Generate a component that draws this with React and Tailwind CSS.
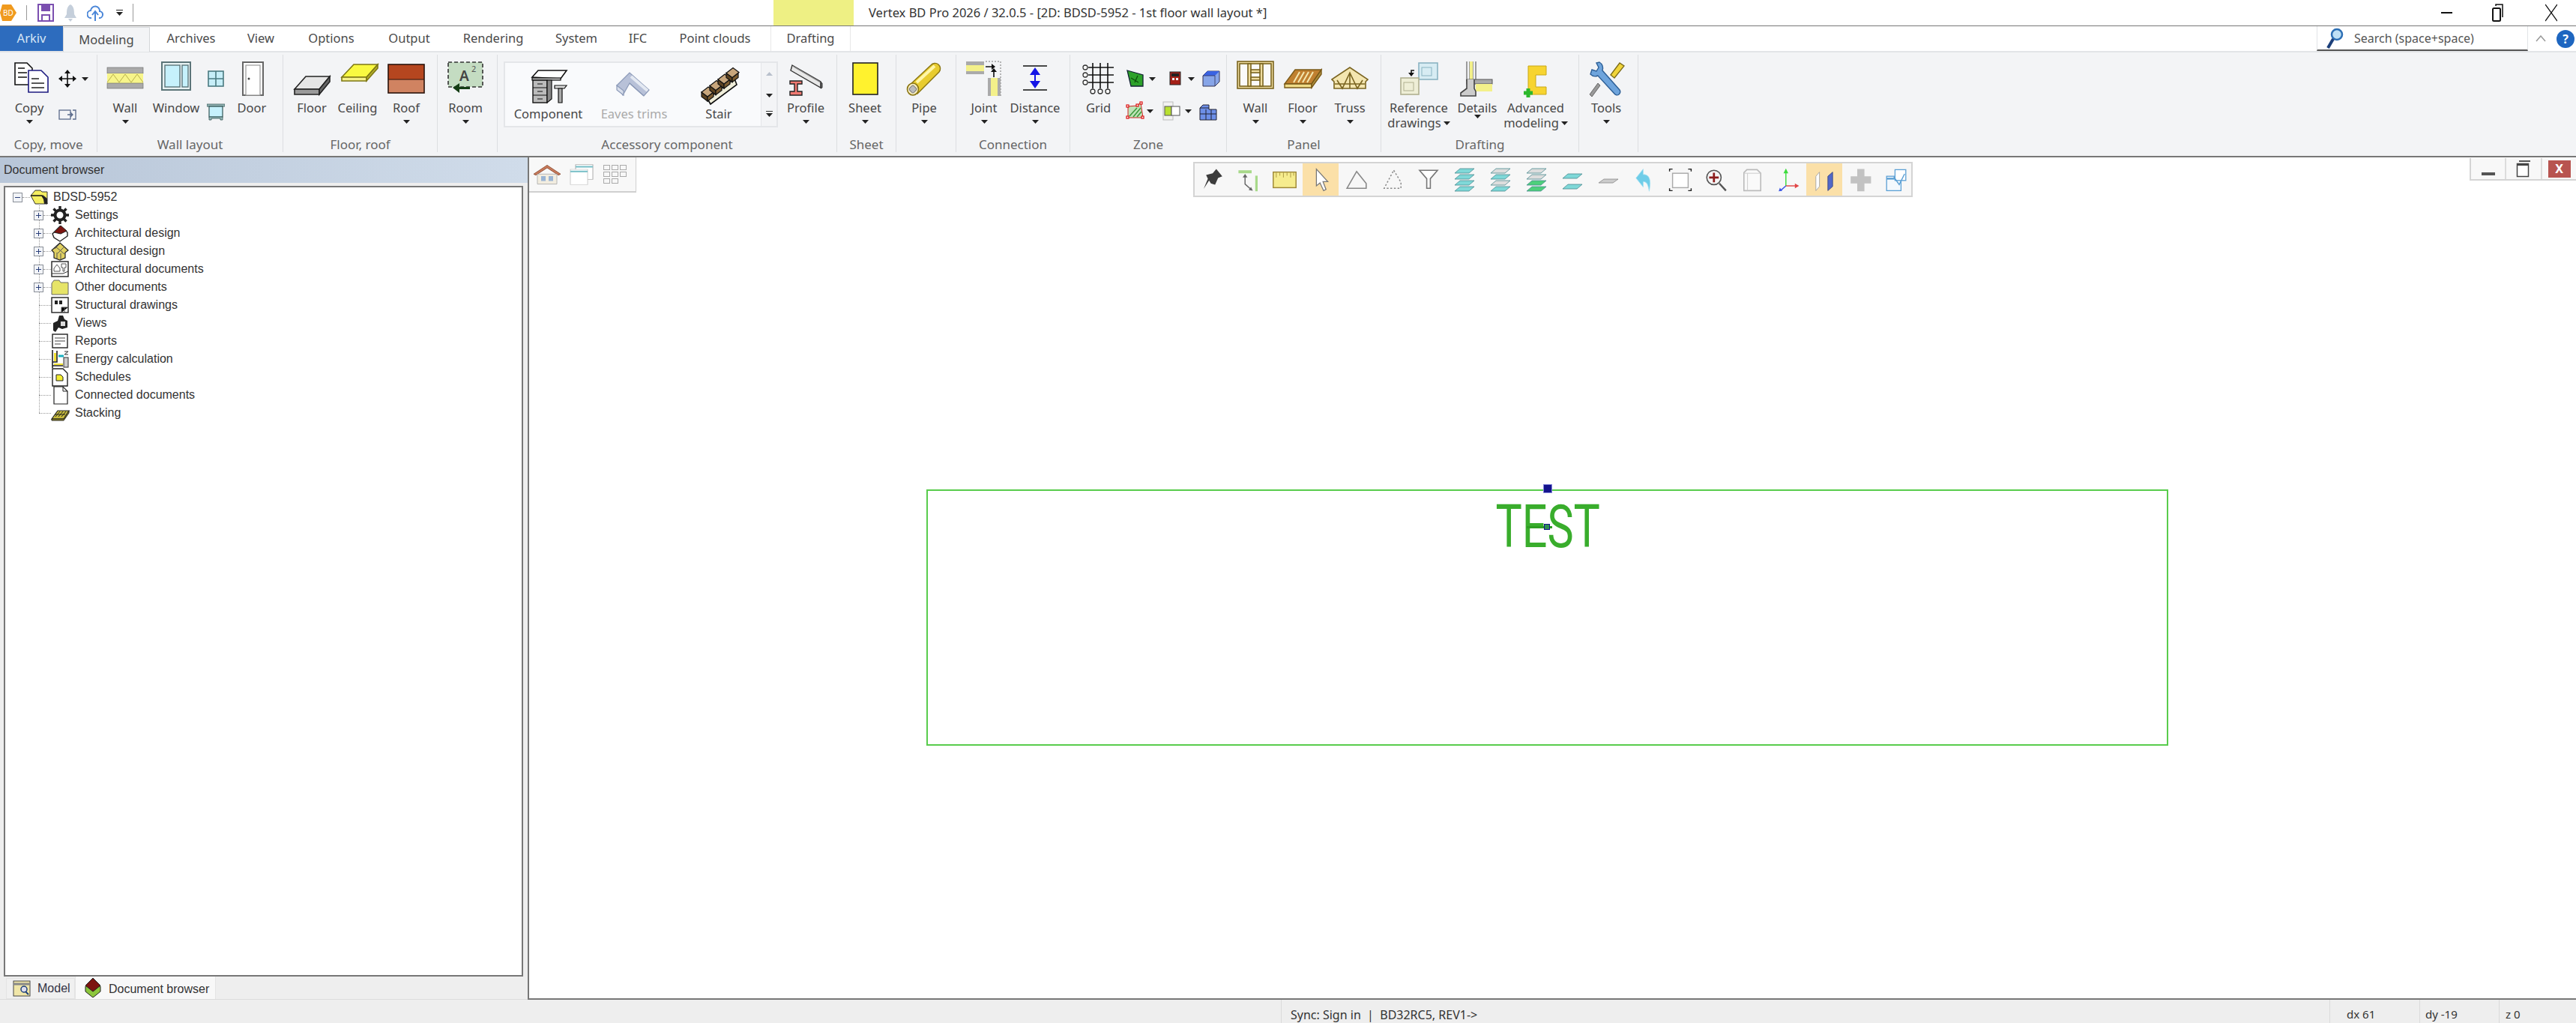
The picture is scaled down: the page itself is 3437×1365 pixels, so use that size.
import React from "react";

const FONT = "font-['Noto_Sans',sans-serif]";
const TREE_FONT = "font-['Liberation_Sans',Arial,sans-serif]";

const Caret = ({ className = "" }) => (
  <svg width="9" height="5" viewBox="0 0 9 5" className={`shrink-0 ${className}`}>
    <polygon points="0,0 9,0 4.5,5" fill="#222" />
  </svg>
);

const Ico = ({ children, vb = "0 0 48 48", className = "w-12 h-12", par }) => (
  <svg viewBox={vb} preserveAspectRatio={par} className={`overflow-visible shrink-0 ${className}`}>
    {children}
  </svg>
);

// ribbon button: icon slot, label, caret
const Tool = ({ className = "", label, caret = true, caretClass = "mt-1.5", children }) => (
  <div className={`flex flex-col items-center shrink-0 ${className}`}>
    <div className="mt-[9px] h-12 w-12 shrink-0">{children}</div>
    <div className="mt-1 text-[16.5px] leading-5 whitespace-nowrap text-[#474747]">{label}</div>
    {caret && <Caret className={caretClass} />}
  </div>
);

const Group = ({ className = "", label, children }) => (
  <div className={`flex flex-col shrink-0 h-[130px] border-r border-[#dcdee1] ${className}`}>
    <div className="flex flex-1">{children}</div>
    <div className="h-5 leading-5 text-center text-[17px] whitespace-nowrap text-[#666]">{label}</div>
  </div>
);

const TwoLine = ({ top, bottom }) => (
  <span className="flex flex-col items-center">
    <span>{top}</span>
    <span className="flex items-center gap-[3px]">
      {bottom}
      <Caret />
    </span>
  </span>
);

const CopyIcon = () => (
  <Ico>
    <path d="M5 2h16l7 7v22H5z" fill="#fff" stroke="#111" strokeWidth="1.6" />
    <path d="M9 9h9M9 15h12M9 21h12" stroke="#111" strokeWidth="1.4" />
    <path d="M23 12h17l9 9v20H23z" fill="#fff" stroke="#1c1a80" strokeWidth="1.6" />
    <path d="M27 23h10M27 29h17M27 35h17" stroke="#222" strokeWidth="1.4" />
  </Ico>
);
const MoveIcon = () => (
  <Ico vb="0 0 24 24" className="w-6 h-6">
    <path d="M12 1v22M1 12h22" stroke="#111" strokeWidth="1.6" />
    <path d="M12 0l4 5H8zM12 24l4-5H8zM0 12l5-4v8zM24 12l-5-4v8z" fill="#111" />
  </Ico>
);
const WallIcon = () => (
  <Ico>
    <rect x="0" y="8" width="48" height="8" fill="#aaa" stroke="#666" strokeWidth="0.6" />
    <rect x="0" y="16" width="48" height="13" fill="#f7f58a" />
    <path d="M0 28l8-11 8 11 8-11 8 11 8-11 8 11" fill="none" stroke="#b8b04c" strokeWidth="1" />
    <rect x="0" y="29" width="48" height="7" fill="#aaa" stroke="#666" strokeWidth="0.6" />
  </Ico>
);
const WindowIcon = () => (
  <Ico>
    <rect x="5" y="1" width="38" height="37" fill="#e8f2f3" stroke="#5c7579" strokeWidth="2" />
    <rect x="9" y="5" width="20" height="29" fill="#c6f1fc" stroke="#5c7579" strokeWidth="1.4" />
    <rect x="32" y="5" width="8" height="29" fill="#c6f1fc" stroke="#5c7579" strokeWidth="1.4" />
  </Ico>
);
const DoorIcon = () => (
  <Ico>
    <rect x="12" y="1" width="27" height="44" fill="#fff" stroke="#666" strokeWidth="2" />
    <rect x="16" y="5" width="19" height="40" fill="#fff" stroke="#999" strokeWidth="1.2" />
    <circle cx="20" cy="23" r="1.5" fill="#444" />
  </Ico>
);
const FloorIcon = () => (
  <Ico>
    <path d="M1 37L16 20h32L34 37z" fill="#e6e6e6" stroke="#222" strokeWidth="1.6" />
    <path d="M1 37h33v7H1z" fill="#9a9a9a" stroke="#222" strokeWidth="1.6" />
    <path d="M34 37L48 20v7L34 44z" fill="#666" stroke="#222" strokeWidth="1.6" />
  </Ico>
);
const CeilingIcon = () => (
  <Ico>
    <path d="M3 21L19 4h32L36 21z" fill="#f9f941" stroke="#7d7714" strokeWidth="1.6" />
    <path d="M3 21h33v5H3z" fill="#f5f08a" stroke="#7d7714" strokeWidth="1.6" />
    <path d="M36 21L51 4v5L36 26z" fill="#b4ae2a" stroke="#7d7714" strokeWidth="1.6" />
  </Ico>
);
const RoofIcon = () => (
  <Ico>
    <rect x="0" y="4" width="48" height="20" fill="#b5461f" />
    <rect x="0" y="24" width="48" height="18" fill="#d08361" />
    <rect x="0" y="4" width="48" height="38" fill="none" stroke="#2a120a" strokeWidth="1.6" />
    <path d="M0 24h48" stroke="#2a120a" strokeWidth="1" />
  </Ico>
);
const RoomIcon = () => (
  <Ico>
    <rect x="1" y="1" width="46" height="33" fill="#c4dcc2" stroke="#333" strokeWidth="1.6" strokeDasharray="5 3" />
    <text x="16" y="26" fontSize="19" fontWeight="600" fill="#444" fontFamily="Noto Sans">A</text>
    <text x="32" y="14" fontSize="11" fill="#555" fontFamily="Noto Sans">2</text>
    <path d="M16 34h14v3H16z" fill="#143d14" />
    <polygon points="16,29 16,42 7,35" fill="#143d14" />
  </Ico>
);
const DeskIcon = () => (
  <Ico>
    <path d="M2 11L10 2h38l-8 11z" fill="#fff" stroke="#111" strokeWidth="1.6" />
    <rect x="2" y="12" width="38" height="3" fill="#ccc" stroke="#111" strokeWidth="1.2" />
    <rect x="3" y="15" width="19" height="30" fill="#bbb" stroke="#111" strokeWidth="1.4" />
    <path d="M3 25h19M3 35h19M9 20h7M9 30h7M9 40h7" stroke="#111" strokeWidth="1.2" />
    <path d="M22 15h6v25l-6 5z" fill="#888" stroke="#111" strokeWidth="1.2" />
    <path d="M32 22h16l-3 4H32z" fill="#ddd" stroke="#111" strokeWidth="1.2" />
    <path d="M37 26h5v19h-5z" fill="#aaa" stroke="#111" strokeWidth="1.2" />
  </Ico>
);
const EavesIcon = () => (
  <Ico>
    <path d="M1 22L18 5l26 23-7 8-19-17-9 16z" fill="#b8c1d8" stroke="#8c9ab8" strokeWidth="1.2" />
    <path d="M1 22v6l9 7v-6zM18 19l19 17" fill="#d8deeb" stroke="#8c9ab8" strokeWidth="1.2" />
    <path d="M20 10l22 19" stroke="#e4e9f2" strokeWidth="4" />
  </Ico>
);
const StairIcon = () => (
  <Ico>
    <path d="M9 40l4 7 35-26-3-8z" fill="#f0eeda" stroke="#111" strokeWidth="1.6" />
    {[0, 1, 2, 3].map((i) => (
      <g key={i} transform={`translate(${i * 11} ${-i * 8.5})`}>
        <path d="M1 31l8 6v6l-8-6z" fill="#5c4220" stroke="#111" strokeWidth="1.2" />
        <path d="M9 37l8-6v6l-8 6z" fill="#7c5c30" stroke="#111" strokeWidth="1.2" />
        <path d="M1 31l9-7 8 6-9 7z" fill="#c8a67c" stroke="#111" strokeWidth="1.2" />
      </g>
    ))}
  </Ico>
);
const ProfileIcon = () => (
  <Ico>
    <path d="M6 5l38 22v8L4 12z" fill="#e8e8e8" stroke="#333" strokeWidth="1.4" />
    <path d="M8 7l36 21" stroke="#888" strokeWidth="1.4" />
    <path d="M44 27l2 2v6l-2 1z" fill="#666" stroke="#333" />
    <path d="M3 26h16v4h-6v10h6v5H3v-5h6V30H3z" fill="#f07a72" stroke="#222" strokeWidth="1.4" />
  </Ico>
);
const SheetIcon = () => (
  <Ico>
    <rect x="8" y="2" width="33" height="42" fill="#fff22e" stroke="#222" strokeWidth="1.6" />
  </Ico>
);
const PipeIcon = () => (
  <Ico>
    <path d="M3 33L33 5a7 7 0 0 1 11 9L15 43z" fill="#e8cc30" stroke="#8a7512" strokeWidth="1.4" />
    <path d="M14 28L38 6" stroke="#fff6a8" strokeWidth="4" />
    <ellipse cx="9" cy="37" rx="7.5" ry="8" fill="#f5ecc2" stroke="#8a7512" strokeWidth="1.6" />
    <rect x="5" y="33" width="8" height="8" rx="2" fill="#bbb" stroke="#777" transform="rotate(45 9 37)" />
  </Ico>
);
const JointIcon = () => (
  <Ico>
    <rect x="0" y="0" width="24" height="17" fill="#aaa" />
    <rect x="0" y="5" width="24" height="8" fill="#f3f08a" />
    <path d="M26 0h20v46" fill="none" stroke="#777" strokeWidth="1" strokeDasharray="2 2" />
    <rect x="29" y="22" width="17" height="24" fill="#aaa" />
    <rect x="33" y="22" width="9" height="24" fill="#f3f08a" />
    <path d="M26 7h8M37 21v-9" stroke="#111" strokeWidth="1.6" />
    <polygon points="34,3 34,11 39,7" fill="#111" />
    <polygon points="33,14 41,14 37,9" fill="#111" />
  </Ico>
);
const DistanceIcon = () => (
  <Ico>
    <path d="M8 6h32M8 38h32" stroke="#111" strokeWidth="1.6" />
    <path d="M24 10v24" stroke="#1414e6" strokeWidth="2" />
    <polygon points="24,8 17,18 31,18" fill="#1414e6" />
    <polygon points="24,36 17,26 31,26" fill="#1414e6" />
  </Ico>
);
const GridIcon = () => (
  <Ico>
    <path d="M10 8h34M10 18h34M10 28h34M16 2v34M26 2v34M36 2v34" stroke="#111" strokeWidth="1.6" />
    <g fill="#fff" stroke="#333" strokeWidth="1.3">
      <circle cx="6" cy="8" r="3" /><circle cx="6" cy="18" r="3" /><circle cx="6" cy="28" r="3" />
      <circle cx="16" cy="40" r="3" /><circle cx="26" cy="40" r="3" /><circle cx="36" cy="40" r="3" />
    </g>
  </Ico>
);
const ZoneGreen = () => (
  <Ico vb="0 0 24 24" className="w-6 h-6">
    <path d="M1 1l21 6v15H6z" fill="#2da12a" stroke="#123" strokeWidth="1.3" />
    <path d="M6 11l10 6M15 8l-4 9" stroke="#0b4d0a" strokeWidth="1.2" />
  </Ico>
);
const ZoneRed = () => (
  <Ico vb="0 0 24 24" className="w-6 h-6">
    <path d="M2 6l12-1 5-4 3 20H2z" fill="#bfe3b8" stroke="#c22" strokeWidth="1" />
    <path d="M4 19l10-11M9 20l10-12M14 20l6-7" stroke="#3c9a3c" strokeWidth="1.6" />
    <g fill="#fff" stroke="#d11" strokeWidth="1.2">
      <rect x="0" y="4" width="3" height="3" /><rect x="13" y="3" width="3" height="3" />
      <rect x="18" y="0" width="3" height="3" /><rect x="0" y="19" width="3" height="3" /><rect x="20" y="19" width="3" height="3" />
    </g>
  </Ico>
);
const House = () => (
  <Ico vb="0 0 16 24" className="w-4 h-6">
    <rect x="1" y="3" width="14" height="17" fill="#a52018" stroke="#222" />
    <path d="M3 5h10v4H3z" fill="#222" />
    <path d="M4 11h3v3H4zM9 11h3v3H9z" fill="#eee" />
  </Ico>
);
const BoxBlue = () => (
  <Ico vb="0 0 24 24" className="w-6 h-6">
    <path d="M1 8l6-6h16v14l-6 6H1z" fill="#87a5e8" stroke="#335" strokeWidth="1" />
    <path d="M1 8l6-6h16l-6 6z" fill="#3a63e2" />
    <path d="M17 8v14M1 8h16" stroke="#335" strokeWidth="0.8" />
  </Ico>
);
const BlocksBlue = () => (
  <Ico vb="0 0 24 24" className="w-6 h-6">
    <path d="M1 8l4-4h8v6h10v14H1z" fill="#6d8fe8" stroke="#223" strokeWidth="1" />
    <path d="M1 16h22M9 10v14M16 10v14M1 8h12" stroke="#223" strokeWidth="1" />
  </Ico>
);
const ZoneBox = () => (
  <Ico vb="0 0 24 24" className="w-6 h-6">
    <rect x="1" y="0" width="13" height="24" fill="#f2f2f2" stroke="#bbb" />
    <rect x="3" y="6" width="9" height="12" fill="#b8e030" stroke="#555" />
    <rect x="12" y="6" width="11" height="12" fill="#fff" stroke="#555" />
  </Ico>
);
const PanelWall = () => (
  <Ico>
    <g fill="#f0dda0" stroke="#7a6420" strokeWidth="1.6">
      <rect x="0" y="0" width="48" height="36" />
      <rect x="3" y="3" width="42" height="30" fill="#fafafa" />
      <rect x="14" y="3" width="4" height="30" />
      <rect x="30" y="3" width="4" height="30" />
      <rect x="18" y="11" width="12" height="4" />
      <rect x="18" y="21" width="12" height="4" />
    </g>
  </Ico>
);
const PanelFloor = () => (
  <Ico>
    <path d="M0 30l14-19h35L36 30z" fill="#c08030" stroke="#7a5a18" strokeWidth="1.4" />
    <path d="M12 28l8-14M18 28l8-14M24 28l8-14M30 28l8-14" stroke="#f3e7b0" strokeWidth="2" />
    <path d="M0 30h36v5H0z" fill="#f0dc88" stroke="#7a5a18" strokeWidth="1.4" />
    <path d="M36 30l13-19v6L36 35z" fill="#b09040" stroke="#7a5a18" strokeWidth="1.4" />
  </Ico>
);
const PanelTruss = () => (
  <Ico>
    <path d="M0 24L24 8l24 16-3 3v9H3v-9z" fill="#f4e6b0" stroke="#7a6420" strokeWidth="1.6" />
    <path d="M7 25l7 11 10-21 10 21 7-11M24 15v21M4 30h40" fill="none" stroke="#7a6420" strokeWidth="1.6" />
  </Ico>
);
const RefIcon = () => (
  <Ico>
    <rect x="24" y="2" width="25" height="22" fill="#d7ecf3" stroke="#8ab3c2" strokeWidth="1.6" />
    <rect x="28" y="8" width="13" height="11" fill="none" stroke="#8ab3c2" />
    <rect x="0" y="22" width="24" height="22" fill="#eeeed6" stroke="#b0b090" strokeWidth="1.6" />
    <rect x="4" y="28" width="13" height="11" fill="none" stroke="#b0b090" />
    <path d="M18 12h-4v5" stroke="#111" strokeWidth="1.6" fill="none" />
    <polygon points="10,15 18,15 14,20" fill="#111" />
  </Ico>
);
const DetailsIcon = () => (
  <Ico>
    <path d="M10 0v26M22 0v26M14 0v26M18 0v26" stroke="#777" strokeWidth="1.4" />
    <rect x="14" y="0" width="4" height="24" fill="#f3f08a" />
    <rect x="10" y="24" width="34" height="6" fill="#aaa" stroke="#555" />
    <rect x="22" y="30" width="22" height="10" fill="#f3f08a" />
    <path d="M10 24v12l-8 6v4h20v-6l-2-4V24" fill="#ccc" stroke="#444" strokeWidth="1.6" />
  </Ico>
);
const AdvancedIcon = () => (
  <Ico>
    <path d="M14 6h24v12h-14v16h14v10H14z" fill="#f7d430" stroke="#c8a818" />
    <path d="M8 42h12M14 36v12" stroke="#2cb82c" strokeWidth="5" />
  </Ico>
);
const ToolsIcon = () => (
  <Ico>
    <path d="M30 18L42 2l6 4-13 16z" fill="#f0d43a" stroke="#7a6a18" strokeWidth="1.3" />
    <path d="M3 17a9 9 0 0 0 10 2l22 24a4 4 0 0 0 7-5L19 12a9 9 0 0 0-4-11l-4 1 3 6-3 5-6-2z" fill="#6ea4dc" stroke="#2d5f96" strokeWidth="1.4" />
    <path d="M2 44l11-15 3 3L5 47z" fill="#999" stroke="#666" />
  </Ico>
);

// little stack of slabs for the layer buttons of the drawing toolbar
const Layers = ({ fills }) => (
  <Ico vb="0 0 30 32" className="w-[30px] h-8">
    {fills.map((f, i) => (
      <path key={i} d={`M2 ${i * 8 + 7}l7-6h19l-7 6z`} fill={f} stroke="#4a8a90" strokeWidth="0.8" />
    ))}
  </Ico>
);

const TB = "w-8 h-8";
const TOOLBAR = [
  <Ico vb="0 0 40 40" className={TB}><path d="M26 2l10 12-7 3-5 11-7-2-3-5-9 14 7-17-3-6 11-3z" fill="#3c3c3c" /></Ico>,
  <Ico vb="0 0 40 40" className={TB}><path d="M3 4h22v5H3z" fill="#a8d98a" /><path d="M31 13h4v26h-4z" fill="#a8d98a" /><path d="M14 13v14l10 9" fill="none" stroke="#666" strokeWidth="1.8" /><path d="M14 10l-4 6h8zM27 38l-7-1 4-5z" fill="#666" /></Ico>,
  <Ico vb="0 0 40 40" className={TB}><rect x="1" y="7" width="38" height="26" fill="#f6ec8e" stroke="#9c8636" strokeWidth="1.8" /><path d="M6 8v8M12 8v5M18 8v8M24 8v5M30 8v8M35 8v5" stroke="#9c8636" /></Ico>,
  <Ico vb="0 0 40 40" className={TB}><path d="M13 2v28l6-5 6 13 4-2-5-13h8z" fill="#fff" stroke="#777" strokeWidth="1.6" /></Ico>,
  <Ico vb="0 0 40 40" className={TB}><path d="M20 6l16 20v8H4z" fill="none" stroke="#888" strokeWidth="2" /></Ico>,
  <Ico vb="0 0 40 40" className={TB}><path d="M22 4l12 20v10H6z" fill="none" stroke="#888" strokeWidth="1.8" strokeDasharray="3 3" /></Ico>,
  <Ico vb="0 0 40 40" className={TB}><path d="M5 4h30L23 18v16h-6V18z" fill="#fff" stroke="#777" strokeWidth="2" /></Ico>,
  <Layers fills={["#7fd8d8", "#7fd8d8", "#7fd8d8", "#7fd8d8"]} />,
  <Layers fills={["#ddd", "#7fd8d8", "#ddd", "#7fd8d8"]} />,
  <Layers fills={["#ddd", "#ddd", "#4ed07a", "#4ed07a"]} />,
  <Ico vb="0 0 30 32" className="w-[30px] h-8"><path d="M2 14l7-6h19l-7 6zM2 28l7-6h19l-7 6z" fill="#7fd8d8" stroke="#4a8a90" strokeWidth="0.8" /></Ico>,
  <Ico vb="0 0 30 32" className="w-[30px] h-8"><path d="M2 20l7-5h19l-7 5z" fill="#ccc" stroke="#888" strokeWidth="0.8" /></Ico>,
  <Ico vb="0 0 40 40" className={TB}><path d="M18 2v9c10 0 14 8 10 28-2-12-4-16-10-16v9L6 17z" fill="#6fcde8" stroke="#a8e2f2" /></Ico>,
  <Ico vb="0 0 40 40" className={TB}><rect x="7" y="9" width="26" height="24" fill="#fff" stroke="#aaa" strokeWidth="1.8" /><path d="M2 6V2h5M33 2h5v4M2 34v4h5M33 38h5v-4" fill="none" stroke="#222" strokeWidth="1.8" /></Ico>,
  <Ico vb="0 0 40 40" className={TB}><circle cx="16" cy="16" r="12" fill="#f5f5f5" stroke="#555" strokeWidth="2" /><path d="M16 8v16M8 16h16" stroke="#8c1c1c" strokeWidth="3.4" /><path d="M25 26l11 12" stroke="#555" strokeWidth="3" /></Ico>,
  <Ico vb="0 0 40 40" className={TB}><path d="M6 8l5-5h17l6 6v29H6z" fill="#fafafa" stroke="#bbb" strokeWidth="2" /><path d="M6 9h28M12 9v29" stroke="#ccc" strokeWidth="1.2" /></Ico>,
  <Ico vb="0 0 40 40" className={TB}><path d="M16 30V6" stroke="#3ddc3d" strokeWidth="1.8" /><polygon points="16,1 12,9 20,9" fill="#3ddc3d" /><path d="M16 30h16" stroke="#e24545" strokeWidth="1.8" /><polygon points="38,30 31,26 31,34" fill="#e24545" /><path d="M16 30L7 38" stroke="#3b55e6" strokeWidth="1.8" /><polygon points="4,39 6,33 10,38" fill="#3b55e6" /></Ico>,
  <Ico vb="0 0 40 40" className={TB}><path d="M6 14l6-7v24l-6 7z" fill="#fff" stroke="#999" /><path d="M26 14l8-7v24l-8 7z" fill="#5268c8" stroke="#33407c" /></Ico>,
  <Ico vb="0 0 40 40" className={TB}><path d="M15 2h12v12h11v12H27v13H15V26H4V14h11z" fill="#c2c2c2" /></Ico>,
  <Ico vb="0 0 40 40" className={TB}><rect x="4" y="14" width="24" height="24" fill="#f4f9fd" stroke="#5a9fd4" strokeWidth="1.6" /><path d="M4 18h24" stroke="#5a9fd4" strokeWidth="3" /><rect x="18" y="3" width="18" height="18" fill="#fff" stroke="#5a9fd4" strokeWidth="1.6" /><path d="M16 15l9 13 9-18" fill="none" stroke="#5a9fd4" strokeWidth="1.8" /></Ico>,
];

const DOTS = "border-t border-dotted border-[#999]";

const TreeIcons = {
  root: <Ico vb="0 0 24 24" className="w-6 h-6"><path d="M1 10l6-7h7l2 2h7v16H7z" fill="#f4ee60" stroke="#333" /><path d="M1 10h15l7 11" fill="none" stroke="#111" strokeWidth="1.6" /><path d="M17 9l6 5v7h-4z" fill="#222" /></Ico>,
  settings: <Ico vb="0 0 24 24" className="w-6 h-6"><circle cx="12" cy="12" r="6.5" fill="none" stroke="#222" strokeWidth="4" /><path d="M12 0v5M12 19v5M0 12h5M19 12h5M3.500 3.500l4 4M16.500 16.500l4 4M3.500 20.500l4-4M16.500 7.500l4-4" stroke="#222" strokeWidth="3.4" /></Ico>,
  arch: <Ico vb="0 0 24 24" className="w-6 h-6"><path d="M2 13L12 3l10 8v5l-10 7-8-5z" fill="#fff" stroke="#222" strokeWidth="1.4" /><path d="M4 11l9-9 8 7-8 4z" fill="#7c1410" stroke="#222" /></Ico>,
  struct: <Ico vb="0 0 24 24" className="w-6 h-6"><path d="M1 11l11-10 11 10-4 3v7l-7 3-8-3v-7z" fill="#e0d060" stroke="#222" strokeWidth="1.2" /><path d="M6 6l12 10M12 2L5 9M18 6l-9 9M8 14v8M13 15v8" stroke="#555" strokeWidth="1" /></Ico>,
  docs: <Ico vb="0 0 24 24" className="w-6 h-6"><rect x="1" y="2" width="22" height="20" fill="#fff" stroke="#222" strokeWidth="1.4" /><path d="M4 11l4-5 4 5v4H4zM14 5h6v5h-2v5h-2v-5h-2z" fill="none" stroke="#555" /><path d="M1 18h15l7-3" fill="none" stroke="#333" /></Ico>,
  folder: <Ico vb="0 0 24 24" className="w-6 h-6"><path d="M1 7l3-4h7l2 3h10v16H1z" fill="#e6e468" stroke="#666" /></Ico>,
  drawings: <Ico vb="0 0 24 24" className="w-6 h-6"><rect x="1" y="2" width="22" height="20" fill="#fff" stroke="#222" strokeWidth="1.4" /><rect x="5" y="6" width="4" height="5" fill="#222" /><rect x="11" y="6" width="4" height="5" fill="#222" /><path d="M14 22v-7h9M18 15v7" stroke="#555" /></Ico>,
  views: <Ico vb="0 0 24 24" className="w-6 h-6"><path d="M3 12l6-3 2-7h5l2 5 4 2v9l-7 2-5-2-4 6-3-2z" fill="#222" /><rect x="13" y="10" width="6" height="6" fill="#ddd" /></Ico>,
  reports: <Ico vb="0 0 24 24" className="w-6 h-6"><rect x="2" y="3" width="20" height="18" fill="#fff" stroke="#222" strokeWidth="1.4" /><path d="M5 8h14M5 12h14M5 16h8" stroke="#444" strokeWidth="1.2" /></Ico>,
  energy: <Ico vb="0 0 24 24" className="w-6 h-6"><path d="M2 0v24M2 16h6V1M2 21h14" stroke="#222" strokeWidth="1.6" fill="none" /><path d="M4 15V4h3v11zM4 18h12v2H4z" fill="#f0e030" /><path d="M10 8h7" stroke="#1ab0c0" strokeWidth="3" /><rect x="17" y="10" width="6" height="13" fill="#ccc" stroke="#333" /><path d="M18 2h5l-5 4h5" fill="none" stroke="#333" /></Ico>,
  sched: <Ico vb="0 0 24 24" className="w-6 h-6"><path d="M2 1h14l6 6v17H2z" fill="#fff" stroke="#222" strokeWidth="1.4" /><path d="M7 9h6l3 3v5H7z" fill="#f2ec30" stroke="#222" /></Ico>,
  conn: <Ico vb="0 0 24 24" className="w-6 h-6"><path d="M4 1h12l6 6v17H4z" fill="#fff" stroke="#222" strokeWidth="1.2" /><path d="M16 1v6h6" fill="none" stroke="#222" /></Ico>,
  stack: <Ico vb="0 0 24 24" className="w-6 h-6"><path d="M1 20L9 9h15l-7 11z" fill="#c8bc3c" stroke="#222" strokeWidth="1.2" /><path d="M6 17l6-7M10 17l6-7M14 17l6-7M5 14h14" stroke="#222" /><path d="M1 20h16l7-11v3l-7 10H1z" fill="#a89a20" stroke="#222" /></Ico>,
};

const TREE = [
  ["Settings", "settings", true],
  ["Architectural design", "arch", true],
  ["Structural design", "struct", true],
  ["Architectural documents", "docs", true],
  ["Other documents", "folder", true],
  ["Structural drawings", "drawings", false],
  ["Views", "views", false],
  ["Reports", "reports", false],
  ["Energy calculation", "energy", false],
  ["Schedules", "sched", false],
  ["Connected documents", "conn", false],
  ["Stacking", "stack", false],
];

const TreeBox = ({ sign }) => (
  <div className="relative w-[13px] h-[13px] shrink-0 border border-[#8a8f98] bg-[#f2f4f8] flex items-center justify-center">
    <div className="w-[7px] h-px bg-[#2a3f7a]" />
    {sign === "+" && <div className="absolute w-px h-[7px] bg-[#2a3f7a]" />}
  </div>
);

const Tab = ({ className = "", children }) => (
  <div className={`h-full flex items-center justify-center shrink-0 text-[16.5px] text-[#4a4a4a] ${className}`}>{children}</div>
);

export default function App() {
  return (
    <div className={`w-[3437px] h-[1365px] overflow-hidden flex flex-col bg-white ${FONT}`}>
      {/* title bar */}
      <div className="h-[35px] shrink-0 flex items-center border-b border-[#777]">
        <svg viewBox="0 0 22 24" className="w-[22px] h-[24px] shrink-0">
          <polygon points="3,1 15,1 22,12 15,23 3,23 0,12" fill="#f09a1e" />
          <text x="4" y="16" fontSize="10" fill="#fff" fontFamily="Noto Sans">BD</text>
        </svg>
        <div className="ml-[13px] w-px h-5 bg-[#999]" />
        <svg viewBox="0 0 22 24" className="ml-[14px] w-[22px] h-[24px] shrink-0">
          <path d="M1 1h20v22H1z" fill="#fff" stroke="#7b4fb0" strokeWidth="2" />
          <rect x="5" y="1" width="12" height="9" fill="#7b4fb0" />
          <rect x="6" y="15" width="10" height="8" fill="#fff" stroke="#7b4fb0" strokeWidth="2" />
        </svg>
        <svg viewBox="0 0 16 24" className="ml-[14px] w-4 h-6 shrink-0">
          <path d="M8 1c4 2 5 6 5 13l3 5H0l3-5C3 7 4 3 8 1zM5 20h6l-3 4z" fill="#c5cfdb" />
        </svg>
        <svg viewBox="0 0 22 24" className="ml-[14px] w-[22px] h-6 shrink-0">
          <path d="M6 19a5 5 0 0 1-1-10 6 6 0 0 1 12 1 4.500 4.500 0 0 1-1 9" fill="none" stroke="#4a86d8" strokeWidth="2" />
          <path d="M11 23V11M7 15l4-5 4 5" fill="none" stroke="#4a86d8" strokeWidth="2" />
        </svg>
        <div className="ml-[17px] flex flex-col items-center gap-[2px]">
          <div className="w-[9px] h-px bg-[#222]" />
          <Caret />
        </div>
        <div className="ml-[13px] w-px h-6 bg-[#999]" />
        <div className="ml-[854px] w-[107px] h-full bg-[#eef084] shrink-0" />
        <div className="ml-5 text-[16.5px] text-[#333] whitespace-nowrap">Vertex BD Pro 2026 / 32.0.5 - [2D: BDSD-5952 - 1st floor wall layout *]</div>
        <div className="ml-auto flex items-center">
          <div className="w-[15px] h-[2px] bg-[#111]" />
          <svg viewBox="0 0 16 24" className="ml-[53px] w-4 h-6">
            <rect x="1" y="6" width="10" height="17" rx="1.500" fill="none" stroke="#111" strokeWidth="2" />
            <path d="M5 3V1h9v17" fill="none" stroke="#111" strokeWidth="1.500" />
          </svg>
          <svg viewBox="0 0 16 24" className="ml-[55px] mr-[25px] w-4 h-6">
            <path d="M0 1l16 22M16 1L0 23" stroke="#111" strokeWidth="1.300" />
          </svg>
        </div>
      </div>

      {/* tabs */}
      <div className="h-[35px] shrink-0 flex items-center border-b-2 border-[#e2e4e7]">
        <Tab className="w-[84px] bg-[#2d6cbe] text-[#d8e6f6]">Arkiv</Tab>
        <Tab className="w-[116px] bg-[#f3f4f6] border-x border-t border-[#d4d6d9] -mb-[2px] h-[36px]">Modeling</Tab>
        <Tab className="w-[110px]">Archives</Tab>
        <Tab className="w-[76px]">View</Tab>
        <Tab className="w-[112px]">Options</Tab>
        <Tab className="w-[96px]">Output</Tab>
        <Tab className="w-[128px]">Rendering</Tab>
        <Tab className="w-[94px]">System</Tab>
        <Tab className="w-[70px]">IFC</Tab>
        <Tab className="w-[136px]">Point clouds</Tab>
        <Tab className="ml-[6px] w-[107px] border-x border-[#e8e8e8]">Drafting</Tab>
        <div className="ml-auto h-full w-[282px] flex items-center border-x border-b-2 border-[#e2e4e7] border-b-[#555]">
          <svg viewBox="0 0 24 32" className="ml-[11px] w-6 h-8 shrink-0">
            <circle cx="15" cy="11" r="7" fill="#bfe0f5" stroke="#2d6fb5" strokeWidth="2.500" />
            <path d="M10 17L3 29" stroke="#1c3f7a" strokeWidth="4" />
          </svg>
          <span className="ml-[14px] text-[16px] text-[#555] whitespace-nowrap">Search (space+space)</span>
        </div>
        <svg viewBox="0 0 14 9" className="ml-[10px] w-[14px] h-[9px] shrink-0">
          <path d="M1 8l6-7 6 7" fill="none" stroke="#999" strokeWidth="1.500" />
        </svg>
        <div className="ml-[14px] mr-[2px] w-6 h-6 rounded-full bg-[#1e66c0] flex items-center justify-center text-white font-bold text-[16px] shrink-0">?</div>
      </div>

      {/* ribbon */}
      <div className="h-[140px] shrink-0 flex py-[3px] bg-[#f3f4f6] border-b-2 border-[#777]">
        <Group className="w-[130px]" label="Copy, move">
          <Tool className="w-[78px]" label="Copy"><CopyIcon /></Tool>
          <div className="flex flex-col">
            <div className="mt-5 flex items-center gap-[7px]"><MoveIcon /><Caret /></div>
            <svg viewBox="0 0 24 16" className="mt-[28px] w-6 h-4">
              <rect x="1" y="2" width="15" height="12" fill="none" stroke="#5a6a8a" strokeWidth="1.300" />
              <path d="M19 2h4v12h-4M12 8h7M16 5l3 3-3 3" fill="none" stroke="#5a6a8a" strokeWidth="1.300" />
            </svg>
          </div>
        </Group>

        <Group className="w-[248px]" label="Wall layout">
          <Tool className="w-[74px]" label="Wall"><WallIcon /></Tool>
          <Tool className="w-[62px]" label="Window" caret={false}><WindowIcon /></Tool>
          <div className="w-11 flex flex-col items-center shrink-0">
            <svg viewBox="0 0 22 22" className="mt-[21px] w-[22px] h-[22px]">
              <rect x="1" y="1" width="20" height="20" fill="#c6eef8" stroke="#4a7a80" strokeWidth="1.600" />
              <path d="M11 1v20M1 11h20" stroke="#4a7a80" strokeWidth="1.600" />
            </svg>
            <svg viewBox="0 0 24 24" className="mt-[21px] w-6 h-6">
              <path d="M0 2h24v3H0z" fill="#9bb" stroke="#355" strokeWidth="0.800" />
              <rect x="3" y="5" width="18" height="14" fill="#c6f1fc" stroke="#355" strokeWidth="1.200" />
              <path d="M3 19h18v4h-3v-2H6v2H3z" fill="#9bb" stroke="#355" strokeWidth="0.800" />
            </svg>
          </div>
          <Tool className="w-[52px]" label="Door" caret={false}><DoorIcon /></Tool>
        </Group>

        <Group className="w-[206px]" label="Floor, roof">
          <Tool className="w-[76px]" label="Floor" caret={false}><FloorIcon /></Tool>
          <Tool className="w-[46px]" label="Ceiling" caret={false}><CeilingIcon /></Tool>
          <Tool className="w-[84px]" label="Roof"><RoofIcon /></Tool>
        </Group>

        <Group className="w-[80px]" label="">
          <Tool className="w-[74px]" label="Room"><RoomIcon /></Tool>
        </Group>

        <Group className="w-[453px]" label="Accessory component">
          <div className="ml-2 mt-[9px] h-[88px] w-[366px] shrink-0 flex border-2 border-[#e4e6e9]">
            <div className="flex flex-1 bg-[#f9fafc]">
              <div className="w-[115px] flex flex-col items-center">
                <div className="mt-2 w-12 h-12"><DeskIcon /></div>
                <div className="mt-[2px] text-[16.5px] leading-5 text-[#474747]">Component</div>
              </div>
              <div className="w-[114px] flex flex-col items-center">
                <div className="mt-2 w-12 h-12"><EavesIcon /></div>
                <div className="mt-[2px] text-[16.5px] leading-5 text-[#aaa] whitespace-nowrap">Eaves trims</div>
              </div>
              <div className="w-[112px] flex flex-col items-center">
                <div className="mt-2 w-12 h-12"><StairIcon /></div>
                <div className="mt-[2px] text-[16.5px] leading-5 text-[#474747]">Stair</div>
              </div>
            </div>
            <div className="w-[21px] shrink-0 flex flex-col items-center border-l border-[#e4e6e9]">
              <svg viewBox="0 0 9 5" className="mt-3 w-[9px] h-[5px]"><polygon points="0,5 9,5 4.500,0" fill="#b8c0cc" /></svg>
              <Caret className="mt-6" />
              <div className="mt-[18px] w-[9px] h-px bg-[#333]" />
              <Caret className="mt-[2px]" />
            </div>
          </div>
          <Tool className="w-[74px]" label="Profile"><ProfileIcon /></Tool>
        </Group>

        <Group className="w-[79px]" label="Sheet">
          <Tool className="w-[74px]" label="Sheet"><SheetIcon /></Tool>
        </Group>
        <Group className="w-[80px]" label="">
          <Tool className="w-[74px]" label="Pipe"><PipeIcon /></Tool>
        </Group>
        <Group className="w-[152px]" label="Connection">
          <Tool className="w-[74px]" label="Joint"><JointIcon /></Tool>
          <Tool className="w-[62px]" label="Distance"><DistanceIcon /></Tool>
        </Group>

        <Group className="w-[209px]" label="Zone">
          <Tool className="w-[75px]" label="Grid" caret={false}><GridIcon /></Tool>
          <div className="flex flex-col">
            <div className="mt-5 flex items-center">
              <ZoneGreen /><Caret className="ml-[6px]" />
              <div className="ml-[18px]"><House /></div>
              <Caret className="ml-[9px]" />
              <div className="ml-[10px]"><BoxBlue /></div>
            </div>
            <div className="mt-[19px] flex items-center">
              <ZoneRed /><Caret className="ml-[3px]" />
              <div className="ml-[12px]"><ZoneBox /></div>
              <Caret className="ml-[6px]" />
              <div className="ml-[10px]"><BlocksBlue /></div>
            </div>
          </div>
        </Group>

        <Group className="w-[206px]" label="Panel">
          <Tool className="w-[76px]" label="Wall"><PanelWall /></Tool>
          <Tool className="w-[50px]" label="Floor"><PanelFloor /></Tool>
          <Tool className="w-[76px]" label="Truss"><PanelTruss /></Tool>
        </Group>

        <Group className="w-[264px]" label="Drafting">
          <Tool className="w-[100px]" label={<TwoLine top="Reference" bottom="drawings" />} caret={false}><RefIcon /></Tool>
          <Tool className="w-[56px]" label="Details" caretClass="-mt-px"><DetailsIcon /></Tool>
          <Tool className="w-[100px]" label={<TwoLine top="Advanced" bottom="modeling" />} caret={false}><AdvancedIcon /></Tool>
        </Group>

        <Group className="w-[79px]" label="">
          <Tool className="w-[72px]" label="Tools"><ToolsIcon /></Tool>
        </Group>
      </div>

      {/* main */}
      <div className="flex-1 min-h-0 flex">
        <div className={`w-[704px] shrink-0 flex flex-col bg-[#eeeeee] ${TREE_FONT}`}>
          <div className="h-[34px] shrink-0 flex items-center pl-[5px] bg-gradient-to-r from-[#b8c6d8] to-[#d0dcea] text-[16px] text-[#333]">Document browser</div>
          <div className="relative mt-1 ml-[5px] w-[693px] flex-1 bg-white border-2 border-[#777]">
            <div className="absolute left-[45px] top-[24px] h-[277px] border-l border-dotted border-[#999]" />
            <div className="h-6 mt-px flex items-center">
              <div className="ml-[10px]"><TreeBox sign="-" /></div>
              <div className={`w-[10px] ${DOTS}`} />
              {TreeIcons.root}
              <span className="ml-[7px] text-[16px] text-[#333]">BDSD-5952</span>
            </div>
            {TREE.map(([label, icon, exp]) => (
              <div key={label} className="h-6 flex items-center">
                {exp ? (
                  <>
                    <div className="ml-[38px]"><TreeBox sign="+" /></div>
                    <div className={`w-[10px] ${DOTS}`} />
                  </>
                ) : (
                  <div className={`ml-[45px] w-[16px] ${DOTS}`} />
                )}
                {TreeIcons[icon]}
                <span className="ml-2 text-[16px] text-[#333] whitespace-nowrap">{label}</span>
              </div>
            ))}
          </div>
          <div className="h-[31px] shrink-0 flex items-end border-b border-[#dcdcdc]">
            <div className="ml-2 w-[92px] h-7 flex items-center bg-[#f0f0f0] border border-[#e4e4e4]">
              <svg viewBox="0 0 24 22" className="ml-2 w-6 h-[22px] shrink-0">
                <rect x="1" y="1" width="22" height="20" fill="#f0e6a8" stroke="#444" />
                <path d="M1 5h22" stroke="#888" strokeWidth="3" />
                <circle cx="15" cy="12" r="4" fill="#dde" stroke="#1c3f7a" strokeWidth="1.500" />
                <path d="M17 15l4 4" stroke="#1c3f7a" strokeWidth="2" />
              </svg>
              <span className="ml-[9px] text-[16px] text-[#334]">Model</span>
            </div>
            <div className="w-[188px] h-[31px] flex items-center bg-[#f8f8f8] border-x border-[#e4e4e4]">
              <svg viewBox="0 0 26 26" className="ml-[10px] w-[26px] h-[26px] shrink-0">
                <path d="M3 18l10 8 10-8V11L13 3 3 11z" fill="#8cc63c" stroke="#222" />
                <path d="M13 0l10 10-10 8L3 10z" fill="#7c1410" stroke="#222" />
              </svg>
              <span className="ml-2 pt-1 text-[16px] text-[#333] whitespace-nowrap">Document browser</span>
            </div>
          </div>
        </div>

        <div className="relative flex-1 min-w-0 bg-white border-l-2 border-b-2 border-[#777]">
          {/* canvas strip */}
          <div className="flex items-start">
            <div className="w-[143px] h-[47px] shrink-0 flex items-center bg-[#f8f8f8] border-r border-b-2 border-[#d0d0d0]">
              <svg viewBox="0 0 40 40" preserveAspectRatio="none" className="ml-1 w-10 h-7">
                <path d="M2 19L20 2l18 17-3 2-15-14L5 21z" fill="#c97a5a" stroke="#8a4a30" />
                <path d="M7 19h26v19H7z" fill="#f2ede0" stroke="#aaa" />
                <path d="M12 23h6v9h-6zM22 23h6v9h-6z" fill="#9ab4d4" />
              </svg>
              <svg viewBox="0 0 32 40" preserveAspectRatio="none" className="ml-[10px] w-8 h-7">
                <rect x="8" y="1" width="23" height="28" fill="#fff" stroke="#aaa" />
                <path d="M8 5h23" stroke="#7ac0c8" strokeWidth="3" />
                <rect x="1" y="10" width="23" height="29" fill="#fff" stroke="#ccc" />
                <path d="M1 14h23" stroke="#7ac0c8" strokeWidth="3" />
              </svg>
              <div className="ml-[13px] grid grid-cols-3 gap-[2px]">
                {Array.from({ length: 8 }).map((_, i) => (
                  <div key={i} className="w-[9px] h-[7px] border border-[#aaa]" />
                ))}
              </div>
            </div>
            <div className="ml-[743px] mt-[6px] w-[960px] h-[47px] shrink-0 flex bg-[#f7f7f7] border-2 border-[#d4d4d4]">
              {TOOLBAR.map((ic, i) => (
                <div key={i} className={`w-12 shrink-0 flex items-center justify-center ${i === 3 || i === 17 ? "bg-[#fbe0a8]" : ""}`}>
                  {ic}
                </div>
              ))}
            </div>
            <div className="ml-auto mt-px h-[30px] flex bg-[#f8f8f8] border-b-2 border-l-2 border-[#d4d4d4]">
              <div className="w-[47px] h-full flex items-end justify-center pb-[5px] border-r-2 border-[#dcdcdc]">
                <div className="w-[18px] h-[4px] bg-[#555]" />
              </div>
              <div className="w-[48px] h-full flex items-center justify-center border-r-2 border-[#dcdcdc]">
                <svg viewBox="0 0 20 24" className="w-5 h-6">
                  <path d="M4 1h15v2H4z" fill="#555" />
                  <rect x="1.500" y="5.500" width="15" height="17" fill="#fff" stroke="#444" strokeWidth="1.500" />
                  <path d="M1 5h16v3H1z" fill="#444" />
                </svg>
              </div>
              <div className="w-[45px] h-full flex items-center justify-center">
                <div className="w-[30px] h-[23px] bg-[#b85450] text-white text-[16px] font-bold leading-[23px] text-center">X</div>
              </div>
            </div>
          </div>

          {/* drawing on the canvas */}
          <div className="absolute left-[530px] top-[443px] w-[1657px] h-[342px] border-2 border-[#58cc4c]" />
          <div className="absolute left-[1353px] top-[436px] w-3 h-3 bg-[#14148c] border border-[#88d]" />
          <div className="absolute left-[1289px] top-[458px] w-[140px] h-[70px] flex items-center justify-center overflow-visible">
            <span className="text-[80px] leading-none font-normal text-[#39ad2c] scale-x-[.74] font-['Roboto',sans-serif]">TEST</span>
          </div>
          <div className="absolute left-[1331px] top-[492px] w-[34px] h-[3px] bg-[#2e9e22]" />
          <div className="absolute left-[1354px] top-[489px] w-[8px] h-[8px] bg-[#2e8e52] border border-[#14148c]" />
        </div>
      </div>

      {/* status bar */}
      <div className="h-[31px] shrink-0 flex items-center bg-[#eeeeee] text-[15px] text-[#333]">
        <div className="ml-[1709px] h-full flex items-center pt-2 pl-3 border-l border-[#dadada] w-[1399px] whitespace-nowrap text-[16px]">Sync: Sign in&nbsp;&nbsp;|&nbsp;&nbsp;BD32RC5, REV1-&gt;</div>
        <div className="h-full flex items-center pt-2 pl-[22px] border-l border-[#dadada] w-[120px]">dx 61</div>
        <div className="h-full flex items-center pt-2 pl-[7px] border-l border-[#dadada] w-[106px]">dy -19</div>
        <div className="h-full flex items-center pt-2 pl-2 border-l border-[#dadada] flex-1">z 0</div>
      </div>
    </div>
  );
}
